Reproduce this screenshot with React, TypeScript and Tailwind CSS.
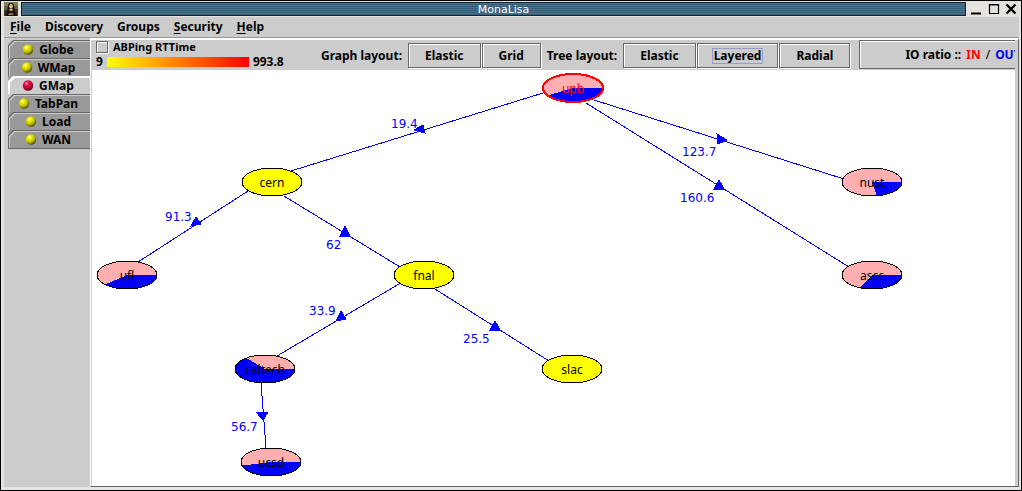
import { useState } from "react";

type Node = { name: string; x: number; y: number; out?: number; root?: boolean };
type Edge = { line: [number, number, number, number]; arrow: string; label: string; tx: number; ty: number };

const NODES: Node[] = [
  { name: "upb", x: 481, y: 18, out: 148, root: true },
  { name: "cern", x: 180, y: 112 },
  { name: "nust", x: 780, y: 112, out: 81 },
  { name: "ufl", x: 35, y: 205, out: 137 },
  { name: "fnal", x: 332, y: 205 },
  { name: "ascc", x: 780, y: 205, out: 115 },
  { name: "caltech", x: 173, y: 299, out: 232 },
  { name: "slac", x: 480, y: 299 },
  { name: "ucsd", x: 179, y: 392, out: 165 },
];

const EDGES: Edge[] = [
  { line: [451, 23, 199, 101], arrow: "322,60 331,55 333,63", label: "19.4", tx: 299, ty: 58 },
  { line: [502, 30, 752, 109], arrow: "625,64 626,74 635,70", label: "123.7", tx: 590, ty: 86 },
  { line: [494, 33, 757, 197], arrow: "627,110 622,119 632,119", label: "160.6", tx: 588, ty: 132 },
  { line: [156, 121, 46, 192], arrow: "104,147 99,156 109,154", label: "91.3", tx: 73, ty: 151 },
  { line: [192, 126, 308, 197], arrow: "253,156 248,166 258,166", label: "62", tx: 234, ty: 179 },
  { line: [307, 214, 185, 286], arrow: "249,241 244,251 254,249", label: "33.9", tx: 217, ty: 245 },
  { line: [343, 219, 457, 291], arrow: "403,251 398,260 408,260", label: "25.5", tx: 371, ty: 273 },
  { line: [169, 313, 174, 378], arrow: "164,342 176,342 171,350", label: "56.7", tx: 139, ty: 361 },
];

const RX = 30;
const RY = 14;

function wedge(x: number, y: number, deg: number) {
  const a = (deg * Math.PI) / 180;
  const ex = x + RX * Math.cos(a);
  const ey = y + RY * Math.sin(a);
  return `M${x} ${y}H${x + RX}A${RX} ${RY} 0 ${deg > 180 ? 1 : 0} 1 ${ex} ${ey}Z`;
}

function GraphNode({ name, x, y, out, root }: Node) {
  return (
    <g>
      <ellipse cx={x} cy={y} rx={RX} ry={RY} fill={out ? "#ffafaf" : "#ffff00"} shapeRendering="crispEdges" />
      {out && <path d={wedge(x, y, out)} fill="#0000ff" shapeRendering="crispEdges" />}
      <ellipse
        cx={x}
        cy={y}
        rx={RX}
        ry={RY}
        fill="none"
        stroke={root ? "#ff0000" : "#000000"}
        strokeWidth={root ? 2 : 1}
        shapeRendering="crispEdges"
      />
      <text x={x} y={y + 5} textAnchor="middle" className={root ? "fill-[#ff0000]" : "fill-black"}>
        {name}
      </text>
    </g>
  );
}

function Graph() {
  return (
    <svg
      className="block size-full font-['Noto_Sans',sans-serif] text-[12px] font-normal"
      role="img"
      aria-label="Network graph"
    >
      {EDGES.map((e) => (
        <g key={e.label}>
          <line
            x1={e.line[0]}
            y1={e.line[1]}
            x2={e.line[2]}
            y2={e.line[3]}
            stroke="#0000ff"
            shapeRendering="crispEdges"
          />
          <polygon points={e.arrow} fill="#0000ff" stroke="#0000ff" strokeWidth="1" shapeRendering="crispEdges" />
          <text x={e.tx} y={e.ty} className="fill-[#0000ff] font-['DejaVu_Sans',sans-serif]">
            {e.label}
          </text>
        </g>
      ))}
      {NODES.map((n) => (
        <GraphNode key={n.name} {...n} />
      ))}
    </svg>
  );
}

function Ball({ red }: { red: boolean }) {
  const id = red ? "ball-red" : "ball-yellow";
  return (
    <svg width="12" height="12" viewBox="0 0 12 12" aria-hidden="true">
      <defs>
        <radialGradient id={id} cx="0.36" cy="0.3" r="0.72">
          <stop offset="0" stopColor={red ? "#ffb0c8" : "#ffffd0"} />
          <stop offset="0.25" stopColor={red ? "#f01050" : "#eeee00"} />
          <stop offset="0.6" stopColor={red ? "#c80038" : "#c4c400"} />
          <stop offset="1" stopColor={red ? "#500018" : "#505000"} />
        </radialGradient>
      </defs>
      <circle cx="6" cy="5.5" r="5.2" fill={`url(#${id})`} />
    </svg>
  );
}

function Portrait() {
  return (
    <svg width="14" height="14" viewBox="0 0 14 14" aria-hidden="true">
      <rect width="14" height="14" fill="#5c6444" />
      <rect width="14" height="4" fill="#7a8058" />
      <path d="M0 8h4v6H0zM10 7h4v7h-4z" fill="#3a3820" />
      <path d="M4 4Q4 1 7 1t3 3l1 5 2 5H1l2-5z" fill="#17120c" />
      <ellipse cx="7" cy="4.3" rx="1.8" ry="2.4" fill="#e2bd76" />
      <path d="M5 8q2 2 4 0l-.5-1h-3z" fill="#d9ae66" />
      <path d="M4 12q3-2 6 0l-2 1H5z" fill="#a87838" />
    </svg>
  );
}

const MENUS = [
  ["File", true],
  ["Discovery", false],
  ["Groups", false],
  ["Security", true],
  ["Help", true],
] as const;

const TABS = ["Globe", "WMap", "GMap", "TabPan", "Load", "WAN"];

const CUT = "[clip-path:polygon(5px_0,100%_0,100%_100%,0_100%,0_5px)]";

function SideTab({ label, active, behind, onClick }: { label: string; active: boolean; behind: string; onClick: () => void }) {
  return (
    <div className={behind}>
      <button
        type="button"
        role="tab"
        aria-selected={active}
        onClick={onClick}
        className={`block h-[18px] w-full pt-px pl-px ${CUT} ${active ? "bg-white" : "bg-[#666666]"}`}
      >
        <span className={`block size-full pt-px pl-px ${CUT} ${active ? "bg-white" : "bg-[#cccccc]"}`}>
          <span
            className={`flex size-full items-center justify-center gap-[5px] pr-1 leading-4 ${CUT} ${
              active ? "bg-[#cccccc]" : "bg-[#999999]"
            }`}
          >
            <Ball red={active} />
            {label}
          </span>
        </span>
      </button>
    </div>
  );
}

function LayoutButton({ label, focused }: { label: string; focused?: boolean }) {
  return (
    <button
      type="button"
      className="flex h-[25px] items-center justify-center border border-[#666666] px-[14px] shadow-[inset_1px_1px_0_#fff,1px_1px_0_#fff]"
    >
      <span className={`border px-px leading-[14px] ${focused ? "border-[#9999cc]" : "border-transparent"}`}>{label}</span>
    </button>
  );
}

export default function App() {
  const [tab, setTab] = useState("GMap");
  const activeIndex = TABS.indexOf(tab);

  return (
    <div className="flex h-screen flex-col border border-black bg-[#e6e2de] pr-px font-['Noto_Sans',sans-serif] text-[12px] font-bold text-black">
      <header className="flex h-4 shrink-0 items-center">
        <div className="flex w-5 justify-end pr-[3px]">
          <Portrait />
        </div>
        <h1 className="h-[14px] flex-1 border border-[#14242e] bg-[repeating-linear-gradient(#44708a_0_1px,#39607a_1px_2px)] pl-5 text-center font-['DejaVu_Sans',sans-serif] text-[11px] leading-[13px] font-normal text-white">
          MonaLisa
        </h1>
        <div className="flex w-[54px] items-center justify-between pr-[3px] pl-1">
          <button type="button" aria-label="Minimize">
            <svg width="12" height="12" viewBox="0 0 12 12" className="block">
              <path d="M1 10.5h10" stroke="#000" strokeWidth="2" />
            </svg>
          </button>
          <button type="button" aria-label="Maximize">
            <svg width="12" height="12" viewBox="0 0 12 12" className="block">
              <path d="M1.5 1.5h9v9h-9zM1 2h10" fill="none" stroke="#000" strokeWidth="1.2" />
            </svg>
          </button>
          <button type="button" aria-label="Close">
            <svg width="12" height="12" viewBox="0 0 12 12" className="block">
              <path d="M1.5 1.5l9 9M10.5 1.5l-9 9" stroke="#000" strokeWidth="2.4" />
            </svg>
          </button>
        </div>
      </header>

      <div className="mr-px mb-[3px] ml-[3px] flex min-h-0 flex-1 flex-col bg-[#cccccc]">
        <nav className="flex h-[21px] shrink-0 items-center gap-[14px] border-b border-[#999999] px-[6px] leading-5">
          {MENUS.map(([name, key]) => (
            <button type="button" key={name}>
              {key ? <span className="underline underline-offset-2">{name[0]}</span> : name[0]}
              {name.slice(1)}
            </button>
          ))}
        </nav>

        <div className="flex min-h-0 flex-1">
          <div role="tablist" className="w-[86px] shrink-0 pt-[2px] pl-1">
            {TABS.map((t, i) => (
              <SideTab
                key={t}
                label={t}
                active={t === tab}
                behind={i === 0 || i - 1 === activeIndex ? "bg-[#cccccc]" : "bg-[#999999]"}
                onClick={() => setTab(t)}
              />
            ))}
            <div className="h-px bg-[#666666]" />
          </div>

          <main className="flex min-w-0 flex-1 flex-col border-t-2 border-r border-b border-l border-t-white border-r-[#666666] border-b-[#666666] border-l-white pr-[3px] pl-px">
            <div className="flex h-[30px] shrink-0 items-start">
              <div className="w-[229px] shrink-0 pl-1">
                <label className="flex h-[14px] items-center gap-[5px] text-[11px] leading-[14px]">
                  <input
                    type="checkbox"
                    className="size-3 appearance-none border border-[#666666] shadow-[inset_1px_1px_0_#fff,1px_1px_0_#fff] checked:bg-[#9999cc]"
                  />
                  ABPing RTTime
                </label>
                <div className="flex h-4 items-center gap-1 leading-4">
                  <span>9</span>
                  <span className="h-[10px] w-[142px] bg-[linear-gradient(to_right,#ffff00,#ff0000)]" />
                  <span>993.8</span>
                </div>
              </div>

              <div className="flex shrink-0 items-center gap-[6px] pt-[3px]">
                <span>Graph layout:</span>
                <div className="flex gap-px">
                  <LayoutButton label="Elastic" />
                  <LayoutButton label="Grid" />
                </div>
                <span>Tree layout:</span>
                <div className="flex gap-px">
                  <LayoutButton label="Elastic" />
                  <LayoutButton label="Layered" focused />
                  <LayoutButton label="Radial" />
                </div>
              </div>

              <div className="ml-[9px] flex h-[29px] min-w-0 flex-1 items-center gap-[5px] overflow-hidden border-y border-l border-[#666666] pl-[45px] whitespace-nowrap shadow-[inset_1px_1px_0_#fff]">
                <span>IO ratio ::</span>
                <span className="text-[#ff0000]">IN</span>
                <span className="font-normal">/</span>
                <span className="text-[#0000ff]">OUT</span>
              </div>
            </div>

            <div className="min-h-0 flex-1 overflow-hidden bg-white">
              <Graph />
            </div>
          </main>
        </div>
      </div>
    </div>
  );
}
